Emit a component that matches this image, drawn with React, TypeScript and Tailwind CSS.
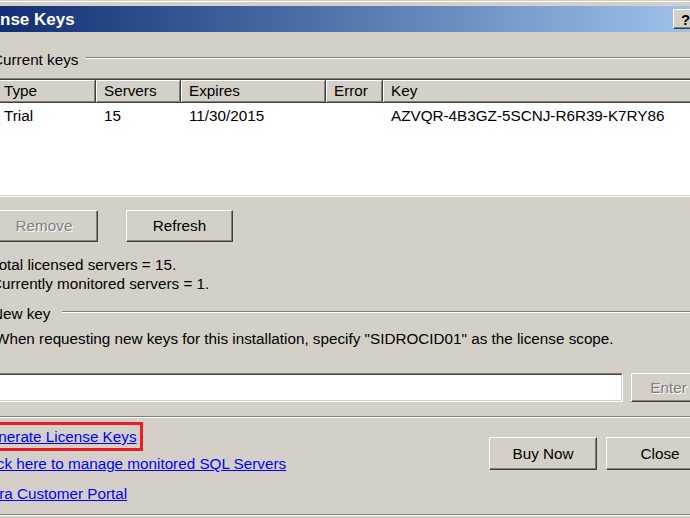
import type { ReactNode } from 'react';

function RaisedButton({ children, disabled, className = '' }: { children: ReactNode; disabled?: boolean; className?: string }) {
  return (
    <button
      className={`flex items-center justify-center bg-[#d4d0c8] border border-t-white border-l-white border-r-[#404040] border-b-[#404040] shadow-[inset_-1px_-1px_0_#808080] leading-none ${
        disabled ? 'text-[#808080] [text-shadow:1px_1px_0_#fff]' : 'text-black'
      } ${className}`}
    >
      {children}
    </button>
  );
}

function Sunken({ children, className = '' }: { children: ReactNode; className?: string }) {
  return (
    <div className={`border border-t-[#808080] border-l-[#808080] border-r-white border-b-white ${className}`}>
      <div className="h-full border border-t-[#404040] border-l-[#404040] border-r-[#d4d0c8] border-b-[#d4d0c8] bg-white flex flex-col">
        {children}
      </div>
    </div>
  );
}

function GroupLabel({ label, gap }: { label: string; gap: string }) {
  return (
    <div className="flex h-[18px] items-center">
      <span className="leading-[18px] whitespace-nowrap">{label}</span>
      <div className={`flex-1 self-start mt-[6px] border-t border-t-[#808080] border-b border-b-white ${gap}`} />
    </div>
  );
}

const columns = [
  { name: 'Type', w: 'w-[100px]' },
  { name: 'Servers', w: 'w-[85px]' },
  { name: 'Expires', w: 'w-[145px]' },
  { name: 'Error', w: 'w-[57px]' },
  { name: 'Key', w: 'flex-1' },
];

const row = ['Trial', '15', '11/30/2015', '', 'AZVQR-4B3GZ-5SCNJ-R6R39-K7RY86'];

export default function App() {
  return (
    <div className="w-[690px] h-[518px] overflow-hidden bg-[#d4d0c8] text-black text-[15.25px] font-['Liberation_Sans',Arial,sans-serif]">
      <div className="-ml-[48px] w-[768px] h-[518px] flex flex-col">
        {/* window frame + title bar */}
        <div className="h-[6px] border-t border-[#d4d0c8]">
          <div className="h-px bg-white" />
        </div>
        <div className="h-[26px] flex items-center bg-linear-to-r from-[#0a246a] to-[#a6caf0] pl-[14px] pr-[1px]">
          <span className="flex-1 text-white font-bold text-[17px] leading-none">License Keys</span>
          <div className="flex gap-[2px]">
            <RaisedButton className="w-[22px] h-[20px] font-bold text-[15px] pl-[3px]">?</RaisedButton>
            <RaisedButton className="w-[22px] h-[20px] font-bold text-[14px]">✕</RaisedButton>
          </div>
        </div>

        <div className="flex-1 flex flex-col pl-[40px] pr-[6px]">
          <div className="mt-[19px]">
            <GroupLabel label="Current keys" gap="ml-[8px]" />
          </div>

          <Sunken className="mt-[9px] ml-[2px] h-[119px]">
            <div className="h-[23px] flex bg-[#d4d0c8]">
              {columns.map((c) => (
                <div
                  key={c.name}
                  className={`${c.w} flex items-center pl-[8px] border-r border-b border-[#404040] shadow-[inset_1px_1px_0_#fff,inset_-1px_-1px_0_#808080]`}
                >
                  {c.name}
                </div>
              ))}
            </div>
            <div className="flex-1 pt-[4px]">
              <div className="h-[19px] flex items-center">
                {columns.map((c, i) => (
                  <div key={c.name} className={`${c.w} pl-[8px] whitespace-nowrap`}>
                    {row[i]}
                  </div>
                ))}
              </div>
            </div>
          </Sunken>

          <div className="mt-[13px] flex h-[32px]">
            <RaisedButton disabled className="-ml-[2px] w-[108px] h-[32px]">Remove</RaisedButton>
            <RaisedButton className="ml-[28px] w-[107px] h-[32px]">Refresh</RaisedButton>
          </div>

          <div className="mt-[13px] -ml-[1px] leading-[19px]">
            <div>Total licensed servers = 15.</div>
            <div>Currently monitored servers = 1.</div>
          </div>

          <div className="mt-[12px]">
            <GroupLabel label="New key" gap="ml-[12px]" />
          </div>

          <div className="mt-[7px] ml-[3px] leading-[18px] whitespace-nowrap">
            When requesting new keys for this installation, specify "SIDROCID01" as the license scope.
          </div>

          <div className="mt-[25px] flex h-[29px]">
            <Sunken className="ml-[2px] w-[629px] h-[29px]">
              <div />
            </Sunken>
            <RaisedButton disabled className="ml-[8px] w-[75px] h-[29px]">Enter</RaisedButton>
          </div>

          <div className="mt-[14px] -ml-[20px] border-t border-t-[#808080] border-b border-b-white" />

          <div className="flex">
            <div className="flex-1 flex flex-col items-start -ml-[20px] mt-[4px]">
              <a className="border-[3px] border-[#ec1c24] pl-[3px] pr-[3px] leading-[23px] text-[#0000ff] underline cursor-pointer whitespace-nowrap">
                Generate License Keys
              </a>
              <a className="mt-[1px] pl-[7px] leading-[23px] text-[#0000ff] underline cursor-pointer whitespace-nowrap">
                Click here to manage monitored SQL Servers
              </a>
              <a className="mt-[7px] pl-[6px] leading-[23px] text-[#0000ff] underline cursor-pointer whitespace-nowrap">
                Idera Customer Portal
              </a>
            </div>
            <div className="flex gap-[9px] mt-[19px]">
              <RaisedButton className="w-[108px] h-[33px]">Buy Now</RaisedButton>
              <RaisedButton className="w-[108px] h-[33px]">Close</RaisedButton>
            </div>
          </div>

          <div className="flex-1" />
          <div className="-ml-[20px] mb-[2px] border-t border-t-[#808080] border-b border-b-white" />
        </div>
      </div>
    </div>
  );
}
